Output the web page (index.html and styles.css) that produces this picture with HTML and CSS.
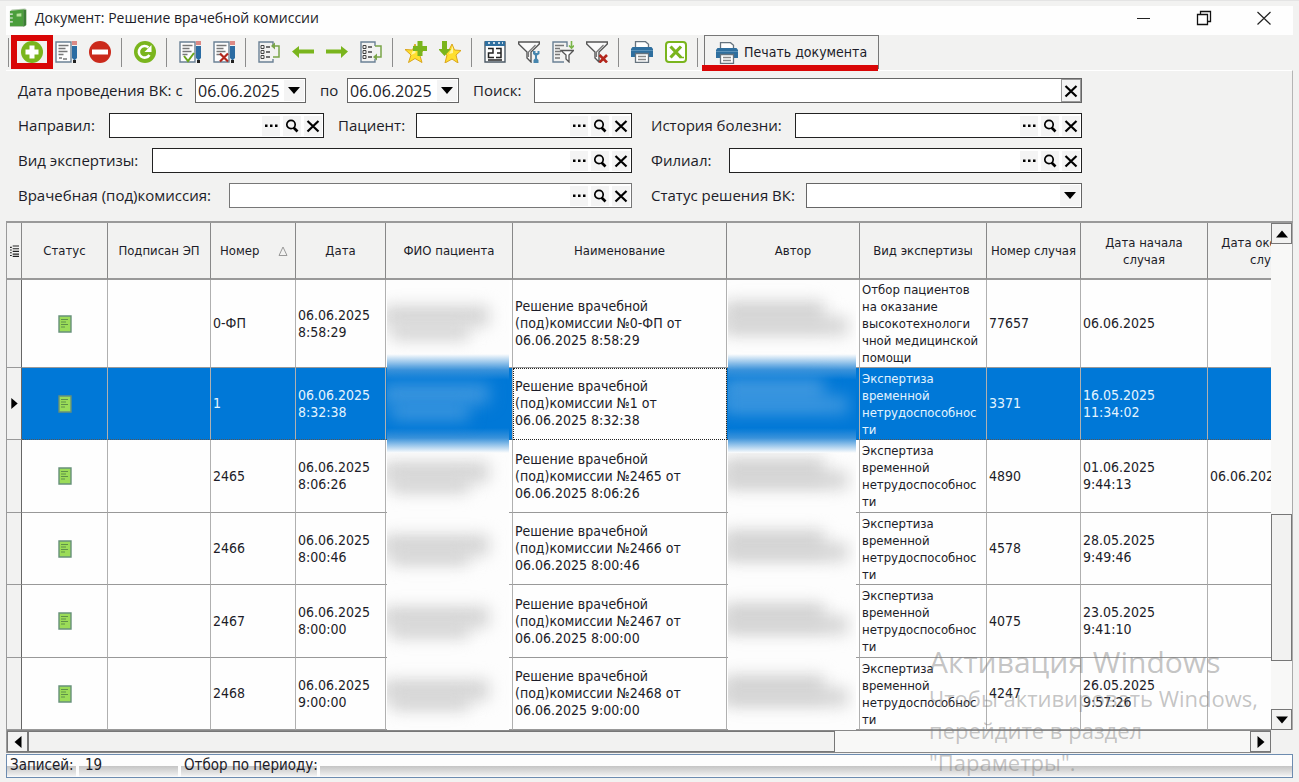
FILE: index.html
```html
<!DOCTYPE html>
<html lang="ru">
<head>
  <meta charset="UTF-8" />
  <meta name="viewport" content="width=device-width, initial-scale=1.0"/>
  <title>Документ: Решение врачебной комиссии</title>
  <link rel="stylesheet" href="styles.css">
</head>
<body>

<svg class="sprite" aria-hidden="true">
  <symbol id="i-page" viewBox="0 0 22 22">
    <path d="M1 1h15v20H1z" fill="#fdfdfd" stroke="#6b8195" stroke-width="1.4"/>
    <path d="M3.500 4.500h10M3.500 7.500h7M3.500 10.500h9M3.500 13.500h5" stroke="#777" stroke-width="1.3"/>
  </symbol>
  <symbol id="i-pen" viewBox="0 0 22 22">
    <path d="M17 0h5v4h-5z" fill="#dc8a86"/>
    <path d="M17 5h5v12l-2 2h-1l-2-2z" fill="#2b6ca3"/>
    <path d="M18 19h3v3h-3z" fill="#222"/>
  </symbol>
  <symbol id="i-add" viewBox="0 0 22 22">
    <circle cx="11" cy="11" r="11" fill="#7ab51d"/>
    <path d="M8.500 4.500h5v4h4v5h-4v4h-5v-4h-4v-5h4z" fill="#fff"/>
  </symbol>
  <symbol id="i-edit" viewBox="0 0 22 22">
    <use href="#i-page"/><path d="M4 17h3m1 1h4" stroke="#777" stroke-width="1.300"/><use href="#i-pen"/>
  </symbol>
  <symbol id="i-del" viewBox="0 0 22 22">
    <circle cx="11" cy="11" r="11" fill="#cb2a1c"/>
    <path d="M3 8.500h16v5H3z" fill="#fff"/>
  </symbol>
  <symbol id="i-refresh" viewBox="0 0 22 22">
    <circle cx="11" cy="11" r="11" fill="#7ab51d"/>
    <path d="M15.500 14a5.800 5.800 0 1 1-1-7.500" fill="none" stroke="#fff" stroke-width="2.600"/>
    <path d="M17.500 4v7h-7z" fill="#fff"/>
  </symbol>
  <symbol id="i-check" viewBox="0 0 22 22">
    <use href="#i-page"/><use href="#i-pen"/>
    <path d="M5 15l4 5 6-8" fill="none" stroke="#6aa51c" stroke-width="2"/>
  </symbol>
  <symbol id="i-uncheck" viewBox="0 0 22 22">
    <use href="#i-page"/><use href="#i-pen"/>
    <path d="M7 12.500l8 8m0-8l-8 8" stroke="#b3261c" stroke-width="2.200"/>
  </symbol>
  <symbol id="i-tree" viewBox="0 0 22 22">
    <path d="M15 5V1H1v20h14v-3" fill="none" stroke="#6b8195" stroke-width="1.400"/>
    <path d="M3 4.500h3v3H3zM3 9.500h3v3H3zM3 14.500h3v3H3z" fill="none" stroke="#444"/>
    <path d="M8 6h4M8 11h4M8 16h4" stroke="#444" stroke-width="1.500"/>
  </symbol>
  <symbol id="i-up" viewBox="0 0 22 22">
    <use href="#i-tree"/>
    <path d="M15 16h6V5h-6" fill="none" stroke="#7aa548" stroke-width="1.500"/>
    <path d="M13 5l4-3.500v7z" fill="#7aa548"/>
  </symbol>
  <symbol id="i-down" viewBox="0 0 22 22">
    <use href="#i-tree"/>
    <path d="M15 5h6v11h-5" fill="none" stroke="#7aa548" stroke-width="1.500"/>
    <path d="M13 16l4-3.500v7z" fill="#7aa548"/>
  </symbol>
  <symbol id="i-left" viewBox="0 0 22 22">
    <path d="M0 10.500L7 5v3.500h15v4H7V17z" fill="#7ab51d"/>
  </symbol>
  <symbol id="i-right" viewBox="0 0 22 22">
    <path d="M22 10.500L15 5v3.500H0v4h15V17z" fill="#7ab51d"/>
  </symbol>
  <symbol id="i-star" viewBox="0 0 22 22">
    <path d="M10 3l2.500 6 7-.5-5 4.500 2.500 8.500-7-4-6.500 4L6 14 0 8.500l7.500.5z" fill="#ffdf2e" stroke="#d9a51c"/>
    <path d="M6 14l4-9 .5 7z" fill="#fff6a0"/>
  </symbol>
  <symbol id="i-staradd" viewBox="0 0 22 22">
    <use href="#i-star"/>
    <path d="M12.500 0h5v5h5v5h-5v5h-5v-5H8V5h4.500z" fill="#7ab51d"/>
  </symbol>
  <symbol id="i-stardown" viewBox="0 0 22 22">
    <path d="M13 3l2.500 6 6.500.5-5 4.500 2 8-6-4-7 4L8 14 2 9h8z" fill="#ffdf2e" stroke="#d9a51c"/>
    <path d="M10 13l4-8v7z" fill="#fff6a0"/>
    <path d="M3 0h5v8h4l-6.500 7L-1 8h4z" fill="#7ab51d"/>
  </symbol>
  <symbol id="i-cal" viewBox="0 0 22 22">
    <path d="M1 1h20v20H1z" fill="#fdfdfd" stroke="#4c5a66" stroke-width="1.400"/>
    <path d="M1 0h20v5H1z" fill="#2f6f9f"/>
    <path d="M4 2h2m3 0h2m3 0h2m2 0h1" stroke="#fff" stroke-width="1.500"/>
    <path d="M4 7.500h5v4.500H4.500v4.500H10M12 7.500h5v9h-5m1-4.500h4M4 19h14" fill="none" stroke="#222" stroke-width="1.500"/>
  </symbol>
  <symbol id="i-funnel" viewBox="0 0 22 22">
    <path d="M.7 1h20.600v2L13 11v10l-4-4v-6L.7 3z" fill="#fafafa" stroke="#555" stroke-width="1.400"/>
    <path d="M10.500 16v-5l7-7" fill="none" stroke="#777" stroke-width="1.200"/>
  </symbol>
  <symbol id="i-filter" viewBox="0 0 22 22">
    <use href="#i-funnel"/>
    <path d="M15 10v3l2 1.500v3L15.500 19v3h5v-3L19 17.500v-3l2.500-1.500v-3h-2v2h-2v-2z" fill="#4786ae"/>
  </symbol>
  <symbol id="i-filterlist" viewBox="0 0 22 22">
    <path d="M15 6V1H1v20h11" fill="none" stroke="#6b8195" stroke-width="1.400"/>
    <path d="M3 4.500h9M3 7.500h5M3 10.500h6M3 13.500h5M3 17h5" stroke="#777" stroke-width="1.300"/>
    <path d="M19.500 0v7M17 4.500l2.500 2.500L22 4.500" fill="none" stroke="#7ab548" stroke-width="1.600"/>
    <path d="M9 9.500h12.500L17 14v7l-3-3v-4z" fill="#fff" stroke="#555" stroke-width="1.300"/>
  </symbol>
  <symbol id="i-filterdel" viewBox="0 0 22 22">
    <use href="#i-funnel"/>
    <path d="M13.500 14l7.500 7.500m0-7.500l-7.500 7.500" stroke="#b3261c" stroke-width="2.600"/>
  </symbol>
  <symbol id="i-print" viewBox="0 0 22 22">
    <path d="M4.500 7V.7h10l3 2.500V7" fill="#fff" stroke="#66737e" stroke-width="1.300"/>
    <path d="M1.500 6h19L22 8v8H0V8z" fill="#2f6f9f"/>
    <path d="M0 9.500h22" stroke="#5d93ba"/>
    <path d="M4.500 12.500h13v9h-13z" fill="#fff" stroke="#66737e" stroke-width="1.300"/>
    <path d="M7 15.500h8M7 18.500h8" stroke="#888" stroke-width="1.300"/>
  </symbol>
  <symbol id="i-excel" viewBox="0 0 22 22">
    <rect x="1" y="1" width="20" height="20" rx="3" fill="#fff" stroke="#7ab51d" stroke-width="2"/>
    <path d="M5.500 5.500l10.500 11M16 5.500l-10.500 11" stroke="#7ab51d" stroke-width="3.200"/>
    <path d="M15 16.500h4" stroke="#7ab51d" stroke-width="1.500"/>
  </symbol>
  <symbol id="i-book" viewBox="0 0 20 20">
    <path d="M3 1l14-1 1.500 1v16L16 19.500H1V3z" fill="#b5c9ae"/>
    <path d="M1 2.500L15 1v17.500H1z" fill="#4b9e3c"/>
    <path d="M15 1l3 .5v16l-3 1.500z" fill="#3c7f35"/>
    <path d="M8 5.500l5-.5v3.500H8z" fill="#b9e29e"/>
    <path d="M1 6h3M1 10h3M1 14h3" stroke="#eee" stroke-width="1.300"/>
  </symbol>
  <symbol id="i-doc" viewBox="0 0 14 18">
    <path d="M1 1h12v16H1z" fill="#9bdc58" stroke="#67907a" stroke-width="1.400"/>
    <path d="M3 4.500h7M3 7h5M3 9.500h7M3 12h4" stroke="#5f9148" stroke-width="1.100"/>
  </symbol>
  <symbol id="i-dots" viewBox="0 0 16 16">
    <path d="M2 6.500h2.500v2.500H2zM7 6.500h2.500v2.500H7zM12 6.500h2.500v2.500H12z" fill="#000"/>
  </symbol>
  <symbol id="i-search" viewBox="0 0 16 16">
    <circle cx="7" cy="6.500" r="4.200" fill="none" stroke="#000" stroke-width="1.700"/>
    <path d="M9.500 9.500l4 4" stroke="#000" stroke-width="2.600"/>
  </symbol>
  <symbol id="i-x" viewBox="0 0 16 16">
    <path d="M2.500 3l11 10.500m0-10.500L2.500 13.500" stroke="#000" stroke-width="2.200"/>
  </symbol>
  <symbol id="i-tri" viewBox="0 0 12 12">
    <path d="M0 9.500h12l-6-7z" fill="#000"/>
  </symbol>
</svg>

<header class="titlebar">
  <svg class="book"><use href="#i-book"/></svg>
  <h1>Документ: Решение врачебной комиссии</h1>
  <div class="winbtns">
    <button aria-label="Свернуть"><svg viewBox="0 0 16 16"><path d="M1 8.500h13" stroke="#222"/></svg></button>
    <button aria-label="Развернуть"><svg viewBox="0 0 16 16"><path d="M1.500 4.500h10v10h-10zM4.500 4V1.500h10v10H12" fill="none" stroke="#111" stroke-width="1.300"/></svg></button>
    <button aria-label="Закрыть"><svg viewBox="0 0 16 16"><path d="M1.500 2l13 12.500m0-12.500l-13 12.500" stroke="#222" stroke-width="1.200"/></svg></button>
  </div>
</header>

<div class="toolbar">
  <span class="sep"></span>
  <button class="marked" aria-label="Добавить"><svg><use href="#i-add"/></svg></button>
  <button aria-label="Изменить"><svg><use href="#i-edit"/></svg></button>
  <button aria-label="Удалить"><svg><use href="#i-del"/></svg></button>
  <span class="sep"></span>
  <button aria-label="Обновить"><svg><use href="#i-refresh"/></svg></button>
  <span class="sep"></span>
  <button aria-label="Подписать"><svg><use href="#i-check"/></svg></button>
  <button aria-label="Снять подпись"><svg><use href="#i-uncheck"/></svg></button>
  <span class="sep"></span>
  <button aria-label="В начало"><svg><use href="#i-up"/></svg></button>
  <button aria-label="Назад"><svg><use href="#i-left"/></svg></button>
  <button aria-label="Вперед"><svg><use href="#i-right"/></svg></button>
  <button aria-label="В конец"><svg><use href="#i-down"/></svg></button>
  <span class="sep"></span>
  <button aria-label="В избранное"><svg><use href="#i-staradd"/></svg></button>
  <button aria-label="Из избранного"><svg><use href="#i-stardown"/></svg></button>
  <span class="sep"></span>
  <button aria-label="Период"><svg><use href="#i-cal"/></svg></button>
  <button aria-label="Настроить фильтр"><svg><use href="#i-filter"/></svg></button>
  <button aria-label="Список фильтров"><svg><use href="#i-filterlist"/></svg></button>
  <button aria-label="Сбросить фильтр"><svg><use href="#i-filterdel"/></svg></button>
  <span class="sep"></span>
  <button aria-label="Печать"><svg><use href="#i-print"/></svg></button>
  <button aria-label="Excel"><svg><use href="#i-excel"/></svg></button>
  <span class="sep"></span>
  <button class="print-doc"><svg><use href="#i-print"/></svg>Печать документа</button>
</div>

<form class="filters">
  <div class="row row-dates">
    <label for="from">Дата проведения ВК: с</label>
    <div class="combo"><select id="from"><option>06.06.2025</option></select></div>
    <label for="to">по</label>
    <div class="combo"><select id="to"><option>06.06.2025</option></select></div>
    <label for="search">Поиск:</label>
    <div class="field search"><input type="text" id="search"><button type="button" aria-label="Очистить"><svg><use href="#i-x"/></svg></button></div>
  </div>
  <div class="row row-who">
    <label for="sender">Направил:</label>
    <div class="field"><input type="text" id="sender"><button type="button" aria-label="Выбрать"><svg><use href="#i-dots"/></svg></button><button type="button" aria-label="Найти"><svg><use href="#i-search"/></svg></button><button type="button" aria-label="Очистить"><svg><use href="#i-x"/></svg></button></div>
    <label class="second" for="patient">Пациент:</label>
    <div class="field"><input type="text" id="patient"><button type="button" aria-label="Выбрать"><svg><use href="#i-dots"/></svg></button><button type="button" aria-label="Найти"><svg><use href="#i-search"/></svg></button><button type="button" aria-label="Очистить"><svg><use href="#i-x"/></svg></button></div>
    <label class="right-col" for="history">История болезни:</label>
    <div class="field"><input type="text" id="history"><button type="button" aria-label="Выбрать"><svg><use href="#i-dots"/></svg></button><button type="button" aria-label="Найти"><svg><use href="#i-search"/></svg></button><button type="button" aria-label="Очистить"><svg><use href="#i-x"/></svg></button></div>
  </div>
  <div class="row row-kind">
    <label for="kind">Вид экспертизы:</label>
    <div class="field"><input type="text" id="kind"><button type="button" aria-label="Выбрать"><svg><use href="#i-dots"/></svg></button><button type="button" aria-label="Найти"><svg><use href="#i-search"/></svg></button><button type="button" aria-label="Очистить"><svg><use href="#i-x"/></svg></button></div>
    <label class="right-col" for="branch">Филиал:</label>
    <div class="field"><input type="text" id="branch"><button type="button" aria-label="Выбрать"><svg><use href="#i-dots"/></svg></button><button type="button" aria-label="Найти"><svg><use href="#i-search"/></svg></button><button type="button" aria-label="Очистить"><svg><use href="#i-x"/></svg></button></div>
  </div>
  <div class="row row-board">
    <label for="board">Врачебная (под)комиссия:</label>
    <div class="field soft"><input type="text" id="board"><button type="button" aria-label="Выбрать"><svg><use href="#i-dots"/></svg></button><button type="button" aria-label="Найти"><svg><use href="#i-search"/></svg></button><button type="button" aria-label="Очистить"><svg><use href="#i-x"/></svg></button></div>
    <label class="right-col" for="state">Статус решения ВК:</label>
    <div class="combo"><select id="state"><option></option></select></div>
  </div>
</form>

<main class="grid">
  <div class="view">
    <table>
      <colgroup>
        <col class="c-mark"><col class="c-status"><col class="c-sign"><col class="c-num"><col class="c-date"><col class="c-fio"><col class="c-name"><col class="c-author"><col class="c-kind"><col class="c-case"><col class="c-start"><col class="c-end">
      </colgroup>
      <thead>
        <tr>
          <th><svg class="menu" viewBox="0 0 10 14"><path d="M3 2h7M3 5h7M3 8h7M3 11h7M3 13.500h7M0 3.500h2M0 6.500h2M0 9.500h2M0 12.500h2" stroke="#222" stroke-width="1.200"/></svg></th>
          <th>Статус</th>
          <th>Подписан ЭП</th>
          <th><span class="sorted">Номер <svg viewBox="0 0 10 10"><path d="M1 9.500h8L5 1z" fill="none" stroke="#999"/></svg></span></th>
          <th>Дата</th>
          <th>ФИО пациента</th>
          <th>Наименование</th>
          <th>Автор</th>
          <th>Вид экспертизы</th>
          <th>Номер случая</th>
          <th>Дата начала<br>случая</th>
          <th>Дата окончания<br>случая</th>
        </tr>
      </thead>
      <tbody>
        <tr>
          <td class="mark"></td>
          <td class="status"><svg><use href="#i-doc"/></svg></td>
          <td></td>
          <td>0-ФП</td>
          <td>06.06.2025<br>8:58:29</td>
          <td><div class="hide"><i class="b1"></i><i class="b2"></i></div></td>
          <td>Решение врачебной<br>(под)комиссии №0-ФП от<br>06.06.2025 8:58:29</td>
          <td><div class="hide"><i class="b3"></i><i class="b4"></i></div></td>
          <td class="kind">Отбор пациентов на оказание высокотехнологи<wbr>чной медицинской помощи</td>
          <td>77657</td>
          <td>06.06.2025</td>
          <td></td>
        </tr>
        <tr class="selected">
          <td class="mark"><svg class="cursor"><use href="#i-tri"/></svg></td>
          <td class="status"><svg><use href="#i-doc"/></svg></td>
          <td></td>
          <td>1</td>
          <td>06.06.2025<br>8:32:38</td>
          <td><div class="hide"><i class="b1"></i><i class="b2"></i></div></td>
          <td class="focus">Решение врачебной<br>(под)комиссии №1 от<br>06.06.2025 8:32:38</td>
          <td><div class="hide"><i class="b3"></i><i class="b4"></i></div></td>
          <td class="kind">Экспертиза временной нетрудоспособнос<wbr>ти</td>
          <td>3371</td>
          <td>16.05.2025<br>11:34:02</td>
          <td></td>
        </tr>
        <tr>
          <td class="mark"></td>
          <td class="status"><svg><use href="#i-doc"/></svg></td>
          <td></td>
          <td>2465</td>
          <td>06.06.2025<br>8:06:26</td>
          <td><div class="hide"><i class="b1"></i><i class="b2"></i></div></td>
          <td>Решение врачебной<br>(под)комиссии №2465 от<br>06.06.2025 8:06:26</td>
          <td><div class="hide"><i class="b3"></i><i class="b4"></i></div></td>
          <td class="kind">Экспертиза временной нетрудоспособнос<wbr>ти</td>
          <td>4890</td>
          <td>01.06.2025<br>9:44:13</td>
          <td>06.06.2025</td>
        </tr>
        <tr>
          <td class="mark"></td>
          <td class="status"><svg><use href="#i-doc"/></svg></td>
          <td></td>
          <td>2466</td>
          <td>06.06.2025<br>8:00:46</td>
          <td><div class="hide"><i class="b1"></i><i class="b2"></i></div></td>
          <td>Решение врачебной<br>(под)комиссии №2466 от<br>06.06.2025 8:00:46</td>
          <td><div class="hide"><i class="b3"></i><i class="b4"></i></div></td>
          <td class="kind">Экспертиза временной нетрудоспособнос<wbr>ти</td>
          <td>4578</td>
          <td>28.05.2025<br>9:49:46</td>
          <td></td>
        </tr>
        <tr>
          <td class="mark"></td>
          <td class="status"><svg><use href="#i-doc"/></svg></td>
          <td></td>
          <td>2467</td>
          <td>06.06.2025<br>8:00:00</td>
          <td><div class="hide"><i class="b1"></i><i class="b2"></i></div></td>
          <td>Решение врачебной<br>(под)комиссии №2467 от<br>06.06.2025 8:00:00</td>
          <td><div class="hide"><i class="b3"></i><i class="b4"></i></div></td>
          <td class="kind">Экспертиза временной нетрудоспособнос<wbr>ти</td>
          <td>4075</td>
          <td>23.05.2025<br>9:41:10</td>
          <td></td>
        </tr>
        <tr>
          <td class="mark"></td>
          <td class="status"><svg><use href="#i-doc"/></svg></td>
          <td></td>
          <td>2468</td>
          <td>06.06.2025<br>9:00:00</td>
          <td><div class="hide"><i class="b1"></i><i class="b2"></i></div></td>
          <td>Решение врачебной<br>(под)комиссии №2468 от<br>06.06.2025 9:00:00</td>
          <td><div class="hide"><i class="b3"></i><i class="b4"></i></div></td>
          <td class="kind">Экспертиза временной нетрудоспособнос<wbr>ти</td>
          <td>4247</td>
          <td>26.05.2025<br>9:57:26</td>
          <td></td>
        </tr>
      </tbody>
    </table>
  </div>
  <div class="vscroll">
    <button aria-label="Вверх"><svg><use href="#i-tri"/></svg></button>
    <div class="track"><div class="thumb"></div></div>
    <button class="down" aria-label="Вниз"><svg><use href="#i-tri"/></svg></button>
  </div>
  <div class="hscroll">
    <button class="left" aria-label="Влево"><svg><use href="#i-tri"/></svg></button>
    <div class="track"><div class="thumb"></div></div>
    <button class="right" aria-label="Вправо"><svg><use href="#i-tri"/></svg></button>
  </div>
</main>

<footer class="statusbar">
  <span class="s-label">Записей:</span>
  <span class="s-count">19</span>
  <span class="s-period">Отбор по периоду:</span>
  <span class="s-rest"></span>
</footer>

<div class="watermark">
  <p class="wm-title">Активация Windows</p>
  <p>Чтобы активировать Windows, перейдите в раздел "Параметры".</p>
</div>

</body>
</html>
```
FILE: styles.css
```css
* {
  box-sizing: border-box;
}
body {
  margin: 0;
  padding: 5px 6px 0;
  position: relative;
  border-top: 1px solid #e4e4e4;
  font-family: "DejaVu Sans Condensed", "DejaVu Sans", sans-serif;
  font-size: 14px;
  line-height: 17px;
  background: #f2f2f1;
  color: #1c1c28;
  overflow-x: hidden;
}
button {
  font: inherit;
  color: inherit;
  border: none;
  background: none;
  padding: 0;
}
svg {
  display: block;
}
.sprite {
  display: none;
}

/* title bar */
.titlebar {
  display: flex;
  align-items: center;
  height: 29px;
  padding: 0 4px 6px 3px;
  background: #fefefe;
}
.book {
  width: 19px;
  height: 20px;
}
h1 {
  flex: 1;
  margin: 0 0 0 7px;
  font-family: "Open Sans", sans-serif;
  font-size: 14px;
  font-weight: normal;
}
.winbtns {
  display: flex;
}
.winbtns button {
  width: 50px;
  margin-left: 10px;
}
.winbtns svg {
  width: 16px;
  height: 16px;
  margin: auto;
}

/* toolbar */
.toolbar {
  display: flex;
  height: 35px;
}
.toolbar > button {
  position: relative;
  width: 34px;
  height: 34px;
}
.toolbar svg {
  width: 22px;
  height: 22px;
  margin: auto;
}
.sep {
  width: 11px;
  height: 29px;
  margin-top: 3px;
  background: linear-gradient(#8c8c8c, #8c8c8c) 4px 0 / 1px 100% no-repeat;
}
.sep:first-child {
  width: 9px;
  background-position: 2px 0;
}
.marked::after {
  content: "";
  position: absolute;
  inset: 0 -4px;
  border: 6px solid #d90606;
}
.toolbar .print-doc {
  display: flex;
  align-items: center;
  width: auto;
  padding: 0 11px;
  border: 1px solid #777;
  border-bottom: none;
}
.print-doc svg {
  margin-right: 6px;
}
.print-doc::after {
  content: "";
  position: absolute;
  left: -3px;
  right: 0;
  bottom: -2px;
  height: 6px;
  background: #d90606;
}

/* filters */
.filters {
  padding: 7px 210px 13px 12px;
  border-top: 1px solid #fff;
  border-right: 1px solid #b5b5b5;
  font-family: "Open Sans", sans-serif;
  font-size: 15px;
}
.row {
  display: grid;
  align-items: center;
  height: 25px;
  white-space: nowrap;
}
.row + .row {
  margin-top: 10px;
}
.row-dates {
  grid-template-columns: 177px 111px 41px 112px 75px 1fr;
}
.row-who {
  grid-template-columns: 91px 215px 92px 216px 163px 1fr;
}
.row-kind {
  grid-template-columns: 134px 480px 97px 1fr;
}
.row-board {
  grid-template-columns: 211px 403px 174px 1fr;
}
.second,
.row-dates .combo + label {
  padding-left: 14px;
}
.right-col {
  padding-left: 19px;
}
.field {
  display: flex;
  align-items: center;
  height: 25px;
  padding: 1px;
  border: 1px solid #222;
  background: #fff;
}
.soft {
  border-color: #777;
}
.field input {
  flex: 1;
  min-width: 0;
  height: 21px;
  border: none;
  outline: none;
  background: none;
  font: inherit;
}
.field button {
  width: 18px;
  height: 20px;
  margin-left: 3px;
  background: #f4f4f4;
}
.field svg {
  width: 16px;
  height: 16px;
  margin: auto;
}
.search {
  border-color: #666;
  padding: 0;
}
.search button {
  width: 20px;
  height: 23px;
  border: 1px solid #999;
}
.combo {
  position: relative;
  height: 25px;
}
.combo select {
  appearance: none;
  width: 100%;
  height: 25px;
  padding: 0 2px;
  border: 1px solid #666;
  border-radius: 0;
  background: linear-gradient(#f4f4f4, #f4f4f4) right 1px center / 20px 21px no-repeat #fff;
  font-family: inherit;
  font-size: 16px;
  line-height: 20px;
  color: #1c1c28;
}
.combo::after {
  content: "";
  position: absolute;
  right: 6px;
  top: 9px;
  border: 6px solid transparent;
  border-top: 7px solid #000;
  border-bottom: none;
}

/* grid */
.grid {
  display: grid;
  grid-template-columns: minmax(0, 1fr) 22px;
  border-top: 2px solid #9a9a9a;
  border-left: 1px solid #9a9a9a;
}
.view {
  overflow: hidden;
}
table {
  table-layout: fixed;
  width: 1328px;
  border-collapse: separate;
  border-spacing: 0;
  background: #fefefe;
}
.c-mark { width: 15px; }
.c-status { width: 86px; }
.c-sign { width: 103px; }
.c-num { width: 85px; }
.c-date { width: 90px; }
.c-fio { width: 127px; }
.c-name { width: 214px; }
.c-author { width: 133px; }
.c-kind { width: 127px; }
.c-case { width: 94px; }
.c-start { width: 127px; }
.c-end { width: 127px; }
th {
  height: 57px;
  padding: 0;
  border-right: 1px solid #888;
  border-bottom: 2px solid #999;
  background: #f2f2f1;
  font-size: 13px;
  font-weight: normal;
  white-space: nowrap;
}
td {
  position: relative;
  height: 72px;
  padding: 1px 2px;
  border-right: 1px solid #b0b0b0;
  border-bottom: 1px solid #999;
}
tbody tr:nth-child(odd) td {
  height: 73px;
}
.kind {
  font-size: 13px;
}
.menu {
  width: 9px;
  height: 13px;
  margin: auto;
}
.sorted {
  display: flex;
  align-items: center;
  justify-content: space-between;
  padding: 0 7px 0 9px;
}
.sorted svg {
  width: 10px;
  height: 10px;
}
td.mark {
  background: #f2f2f1;
  border-right-color: #666;
}
.status svg {
  width: 14px;
  height: 18px;
  margin: auto;
}
.cursor {
  width: 11px;
  height: 11px;
  transform: rotate(90deg);
}
.selected td:not(.mark) {
  background: #0078d7;
  color: #e3f4ff;
  border-bottom: 1px dotted #555;
}
.selected td.focus {
  background: #fefefe;
  color: #1c1c28;
  outline: 1px dotted #222;
  outline-offset: -1px;
}

/* hidden personal data */
.hide {
  position: absolute;
  inset: 0 3px -1px 1px;
  overflow: hidden;
  background: #fdfdfd;
}
.selected .hide {
  z-index: 1;
  inset: -14px 3px -14px 1px;
  background: linear-gradient(#fdfdfd, #3a92da 16px, #0078d7 26px, #0078d7 74px, #3a92da 84px, #fdfdfd);
}
.hide i {
  position: absolute;
  background: #d3d3d3;
  filter: blur(8px);
}
.selected .hide i {
  background: #3d97df;
}
.b1 {
  left: -4px;
  right: 20px;
  top: 30%;
  height: 20px;
}
.b2 {
  left: 4px;
  right: 40px;
  top: 50%;
  height: 16px;
}
.b3 {
  left: -4px;
  right: 32px;
  top: 24%;
  height: 24px;
}
.b4 {
  left: -4px;
  right: 8px;
  top: 42%;
  height: 18px;
}

/* scrollbars */
.track {
  flex: 1;
  background: #f8f8f7;
}
.vscroll {
  display: flex;
  flex-direction: column;
  border-right: 1px solid #aaa;
}
.vscroll button,
.hscroll button {
  flex: none;
  width: 21px;
  height: 21px;
  border: 1px solid #777;
}
.vscroll svg,
.hscroll svg {
  width: 12px;
  height: 12px;
  margin: auto;
}
.down svg {
  transform: rotate(180deg);
}
.left svg {
  transform: rotate(-90deg);
}
.right svg {
  transform: rotate(90deg);
}
.thumb {
  border: 1px solid #777;
  background: #f2f2f1;
}
.vscroll .track {
  display: grid;
  grid-template-rows: 58% 147px;
}
.vscroll .thumb {
  grid-row: 2;
}
.hscroll {
  display: flex;
  border-top: 1px solid #888;
  border-bottom: 1px solid #888;
}
.hscroll .track {
  display: grid;
  grid-template-columns: 66%;
}

/* status bar */
.statusbar {
  display: flex;
  height: 24px;
  margin-top: 1px;
  border: 1px solid #6d8cb0;
  background: #fdfdfd;
  font-size: 15px;
  line-height: 21px;
  white-space: nowrap;
}
.statusbar span {
  margin-right: 3px;
  padding-left: 3px;
  background: linear-gradient(#fdfdfd 11px, #c4c4c4 11px, #ececec 20px, #fdfdfd);
}
.s-label {
  width: 69px;
}
.statusbar .s-count {
  width: 99px;
  padding-left: 6px;
}
.s-period {
  width: 136px;
}
.statusbar .s-rest {
  flex: 1;
  margin-right: 0;
}

/* system watermark over the window */
.watermark {
  position: absolute;
  top: 641px;
  right: 40px;
  width: 330px;
  height: 135px;
  overflow: hidden;
  font-family: "Open Sans", sans-serif;
  font-size: 22px;
  line-height: 32px;
  color: rgba(125, 125, 125, 0.45);
  pointer-events: none;
}
.watermark p {
  margin: 0;
}
.watermark .wm-title {
  font-size: 30px;
  line-height: 40px;
}
```
